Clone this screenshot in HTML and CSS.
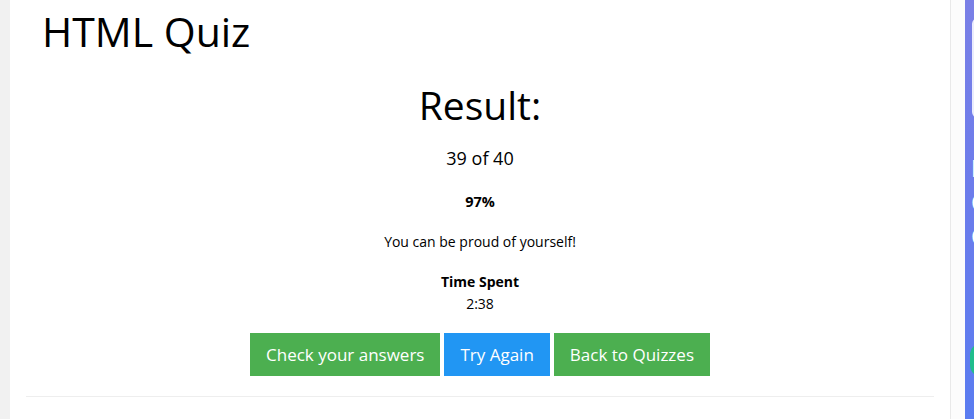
FILE: index.html
```html
<!DOCTYPE html>
<html lang="en">
<head>
<meta charset="utf-8">
<title>HTML Quiz</title>
<link rel="stylesheet" href="styles.css">
</head>
<body>
<div class="page">
  <div class="left-strip"></div>
  <main class="main">
    <h1 class="title">HTML Quiz</h1>
    <section class="result">
      <h2 class="result-head">Result:</h2>
      <p class="score">39 of 40</p>
      <p class="percent">97%</p>
      <p class="message">You can be proud of yourself!</p>
      <div class="time">
        <div class="time-label">Time Spent</div>
        <div class="time-value">2:38</div>
      </div>
      <div class="buttons">
        <a class="btn btn-green">Check your answers</a>
        <a class="btn btn-blue">Try Again</a>
        <a class="btn btn-green">Back to Quizzes</a>
      </div>
    </section>
    <hr class="rule">
  </main>
  <div class="gutter"></div>
  <aside class="sidebar">
    <div class="side-box"></div>
    <div class="side-text">
      <div class="side-letter">B</div>
      <div class="side-letter">C</div>
      <div class="side-letter">C</div>
    </div>
    <div class="side-btn"></div>
  </aside>
</div>
</body>
</html>
```
FILE: styles.css
```css
html, body {
  margin: 0;
  padding: 0;
  height: 100%;
  overflow: hidden;
  background: #ffffff;
}

body {
  font-family: "Open Sans", "Noto Sans", sans-serif;
  color: #000;
}

.page {
  display: flex;
  height: 419px;
  width: 1200px;
}

.left-strip {
  width: 10px;
  flex: none;
  background: #f1f1f1;
}

.main {
  flex: none;
  width: 941px;
  background: #ffffff;
  border-right: 1px solid #e9e9e9;
  padding: 0 16px;
  box-sizing: border-box;
}

.title {
  margin: 1px 0 0 0;
  padding-left: 16px;
  font-size: 41px;
  font-weight: 400;
  line-height: 60px;
}

.result {
  display: flex;
  flex-direction: column;
  align-items: center;
  text-align: center;
}

.result-head {
  margin: 20px 0 0 0;
  font-size: 39px;
  font-weight: 400;
  line-height: 48px;
}

.score {
  margin: 14px 0 0 0;
  font-size: 18px;
  line-height: 30px;
}

.percent {
  margin: 18px 0 0 0;
  font-size: 14.5px;
  font-weight: 700;
  line-height: 22px;
}

.message {
  margin: 18px 0 0 0;
  font-size: 14px;
  line-height: 22px;
}

.time {
  margin-top: 18px;
  font-size: 14px;
  line-height: 22px;
}

.time-label {
  font-weight: 700;
}

.buttons {
  margin-top: 18px;
  display: flex;
  gap: 4px;
}

.btn {
  display: block;
  padding: 8px 16px;
  font-size: 17px;
  line-height: 27px;
  color: #ffffff;
  text-decoration: none;
}

.btn-green {
  background: #4caf50;
}

.btn-blue {
  background: #2196f3;
}

.rule {
  margin: 20px 0 0 0;
  border: 0;
  border-top: 1px solid #eeeeee;
  height: 0;
}

.gutter {
  width: 14px;
  flex: none;
  background: #fcfcfc;
}

.sidebar {
  width: 200px;
  flex: none;
  background: linear-gradient(180deg, #7a80e6 0%, #6c7ceb 45%, #5a7cf0 100%);
  overflow: hidden;
}

.side-box {
  margin: 18px 0 0 7px;
  height: 100px;
  width: 150px;
  border: 2px solid rgba(255, 255, 255, 0.85);
  border-radius: 6px;
  box-sizing: border-box;
}

.side-text {
  margin: 33px 0 0 6px;
  display: flex;
  flex-direction: column;
}

.side-letter {
  color: #ffffff;
  font-family: "Open Sans", sans-serif;
  font-weight: 700;
  font-size: 24px;
  line-height: 34px;
  height: 34px;
}

.side-btn {
  margin: 90px 0 0 5px;
  width: 120px;
  height: 34px;
  border-radius: 12px;
  background: #1fbd8c;
}
```
